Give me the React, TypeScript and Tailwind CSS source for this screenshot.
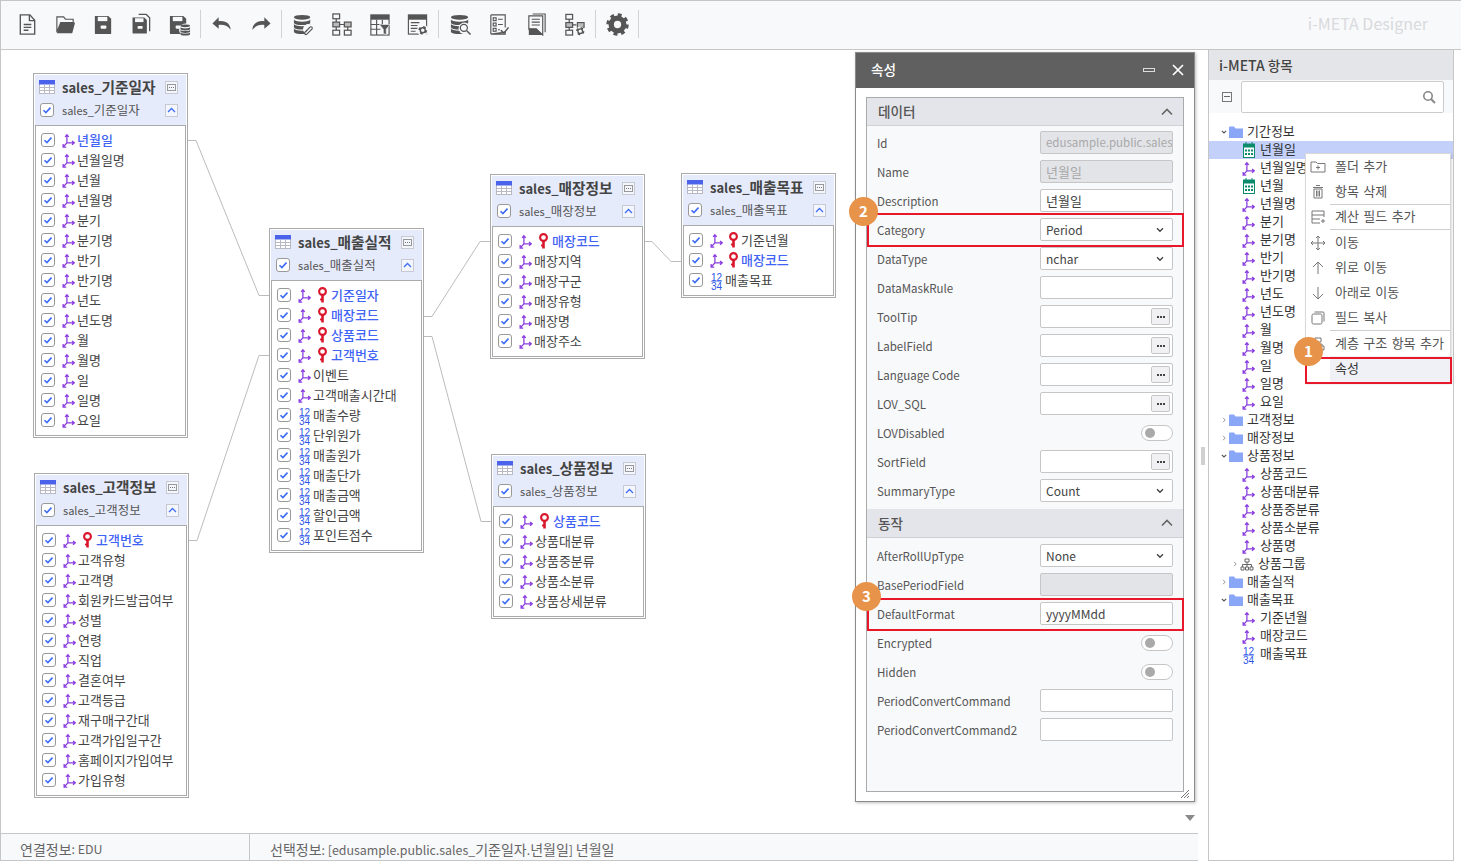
import React from "react";

const TB = "#555";

/* Hangul runs are set slightly larger than the Latin text around them, as in the reference. */
function T({ s }: { s: string }) {
  return (
    <>
      {s.split(/([가-힣]+)/).map((p, i) =>
        /[가-힣]/.test(p) ? <span key={i} className="text-[1.13em]">{p}</span> : <span key={i}>{p}</span>
      )}
    </>
  );
}

function Gear({ x, y, r = 4 }: { x: number; y: number; r?: number }) {
  return (
    <g>
      <circle cx={x} cy={y} r={r} fill="none" stroke={TB} strokeWidth={r * 0.55} strokeDasharray={`${r * 0.75} ${r * 0.82}`} />
      <circle cx={x} cy={y} r={r * 0.72} fill="none" stroke={TB} strokeWidth={r * 0.42} />
    </g>
  );
}
function Db({ x, y, w = 8, h = 9 }: { x: number; y: number; w?: number; h?: number }) {
  const ry = h * 0.13;
  const gap = h * 0.06;
  const bh = (h - 2 * ry - 3 * gap) / 3;
  const rx = w / 2;
  return (
    <g fill={TB}>
      <ellipse cx={x + rx} cy={y + ry} rx={rx} ry={ry} />
      {[0, 1, 2].map((i) => {
        const y0 = y + ry + gap * (i + 1) + bh * i + ry * 0.4;
        return <path key={i} d={`M${x} ${y0}a${rx} ${ry} 0 0 0 ${w} 0v${bh}a${rx} ${ry} 0 0 1 ${-w} 0z`} />;
      })}
    </g>
  );
}
function Floppy({ w = 18 }: { w?: number }) {
  return (
    <g>
      <path d={`M3 3h${w - 4}l3 3v15a1 1 0 0 1-1 1H4a1 1 0 0 1-1-1z`} fill={TB} />
      <rect x="6" y="4" width={w - 8} height="4.5" fill="#f8f9fb" />
      <rect x="9" y="13" width="6" height="3.5" rx="1" fill="#f8f9fb" />
    </g>
  );
}
function TreeNodes() {
  return (
    <g fill="none" stroke={TB} strokeWidth="1.3">
      <rect x="3" y="1.5" width="7" height="5" />
      <rect x="3" y="10" width="7" height="5" fill="#bbb" />
      <rect x="3" y="18" width="7" height="5" />
      <path d="M6.5 6.5V10M6.5 15v3M10 12.5h4" />
    </g>
  );
}
const toolIcons: React.ReactNode[][] = [
  [
    <g key="a" fill="none" stroke={TB} strokeWidth="1.4"><path d="M4.5 2h10l5 5.5V22h-15z" /><path d="M14 2v6h5.5M8 12h8M8 15h8M8 18h5" /></g>,
    <g key="b"><path d="M3 4h7l2 2.5h8V10H7L3 20z" fill="none" stroke={TB} strokeWidth="1.2" /><path d="M7 10h15l-3 11H3z" fill={TB} /></g>,
    <Floppy key="c" />,
    <g key="d"><g transform="translate(0 2) scale(.88)"><Floppy /></g><path d="M9 1.5h8l3.5 3.5v14" fill="none" stroke={TB} strokeWidth="1.3" /></g>,
    <g key="e"><g transform="translate(-1 0)"><Floppy /></g><circle cx="18" cy="17.5" r="6.5" fill="#f8f9fb" /><Db x={13} y={12} w={10} h={11} /></g>,
  ],
  [
    <path key="a" d="M8 8.5V4.5L1.5 11 8 16.5v-4c5-.5 9 .5 12.5 5 0-5.500-4.500-10-12.500-9z" fill={TB} />,
    <path key="b" d="M16 8.5V4.5L22.500 11 16 16.500v-4c-5-.5-9 .5-12.500 5 0-5.500 4.500-10 12.500-9z" fill={TB} />,
  ],
  [
    <g key="a"><Db x={2} y={2} w={17} h={19} /><circle cx="17" cy="17" r="5.5" fill="#f8f9fb" /><path d="M14 20l5-5.500a1.500 1.500 0 0 1 2 2l-5.500 5.500a1.200 1.200 0 0 1-2-2l5-5" fill="none" stroke={TB} strokeWidth="1.2" /></g>,
    <g key="b" fill="none" stroke={TB} strokeWidth="1.3"><rect x="3" y="1" width="7" height="5" /><rect x="3" y="9.500" width="7" height="5" fill="#bbb" /><rect x="15" y="9.500" width="7" height="5" fill="#bbb" /><rect x="3" y="18" width="7" height="5" /><rect x="15" y="18" width="7" height="5" /><path d="M6.500 6v3.500M6.500 14.500V18M18.500 14.500V18M10 12h5" /></g>,
    <g key="c"><rect x="3" y="2" width="19" height="21" fill="none" stroke={TB} strokeWidth="1.2" /><rect x="3" y="2" width="19" height="5" fill={TB} /><path d="M3 12h12M3 17h10M9 7v16M15 7v6" stroke={TB} strokeWidth="1.2" /><path d="M12 12h11l-4 5v6l-3-2v-4z" fill={TB} stroke="#f8f9fb" strokeWidth=".6" /></g>,
    <g key="d"><rect x="2.500" y="2" width="19" height="20" fill="none" stroke={TB} strokeWidth="1.2" /><rect x="2.500" y="2" width="19" height="5" fill={TB} /><path d="M5 10h9M5 13h7M5 16h9M5 19h5" stroke={TB} strokeWidth="1.2" /><circle cx="17.500" cy="18" r="6" fill="#f8f9fb" /><Gear x={17.5} y={18} r={3.6} /></g>,
  ],
  [
    <g key="a"><Db x={2} y={2} w={18} h={19} /><circle cx="16" cy="16" r="6" fill="#f8f9fb" /><circle cx="15.500" cy="15.500" r="3.700" fill="none" stroke={TB} strokeWidth="1.3" /><path d="M18.500 18.500l4 4" stroke={TB} strokeWidth="1.6" /></g>,
    <g key="b" fill="none" stroke={TB} strokeWidth="1.2"><path d="M4 2h15v13M19 20v2H4z" /><path d="M4 2v20" /><rect x="6.500" y="5" width="3" height="3" /><rect x="6.500" y="10.500" width="3" height="3" /><rect x="6.500" y="16" width="3" height="3" /><path d="M11.500 6.500h5M11.500 12h5M11.500 17.500h2" /><path d="M14.500 18l3 3 5-6" strokeWidth="1.6" /></g>,
    <g key="c"><path d="M8 1h13v19" fill="none" stroke={TB} strokeWidth="1.2" /><path d="M4 3h14.500v20L12 17H4z" fill="#f8f9fb" stroke={TB} strokeWidth="1.2" /><path d="M4 16h8l6.500 7H4z" fill={TB} /><path d="M7 6.500h8.500M7 9.500h8.500M7 12.500h8.500" stroke={TB} strokeWidth="1.2" /></g>,
    <g key="d"><TreeNodes /><rect x="15" y="10" width="7" height="5" fill="#bbb" stroke={TB} strokeWidth="1.2" /><circle cx="18" cy="19" r="4.800" fill="#f8f9fb" /><Gear x={18} y={19} r={3.4} /></g>,
  ],
  [<g key="a"><circle cx="12" cy="12" r="6.600" fill="none" stroke={TB} strokeWidth="5.6" /><circle cx="12" cy="12" r="10" fill="none" stroke={TB} strokeWidth="3.4" strokeDasharray="4 3.85" /></g>],
];

function Toolbar() {
  return (
    <div className="h-[50px] shrink-0 flex items-center pl-[7px] pb-[2px] bg-[#f8f9fb] border-l border-t border-b border-[#c6c6c6]">
      {toolIcons.map((group, i) => (
        <React.Fragment key={i}>
          <div className="flex">
            {group.map((ic, j) => (
              <div key={j} className="w-[38px] flex justify-center">
                <svg width="23" height="23" viewBox="0 0 24 24">{ic}</svg>
              </div>
            ))}
          </div>
          <div className="w-px h-[28px] mx-[2px] bg-[#d2d2d2]" />
        </React.Fragment>
      ))}
      <div className="ml-auto mr-[33px] pb-[2px] text-[16px] text-[#d9dadd]">i-META Designer</div>
    </div>
  );
}

function Check() {
  return (
    <span className="w-[14px] h-[14px] shrink-0 flex items-center justify-center rounded-[3px] border border-[#999] bg-white">
      <svg width="10" height="10" viewBox="0 0 10 10"><path d="M1.500 5.200l2.400 2.400 4.600-5" fill="none" stroke="#3f6cf5" strokeWidth="1.6" /></svg>
    </span>
  );
}
function Dim() {
  return (
    <svg width="13" height="15" viewBox="0 0 12 14" className="shrink-0">
      <path d="M4.500 9.200V2M4.500 9.200H11M4.500 9.200L1.200 12.800M2.800 3.600L4.500 1.600l1.700 2M9.300 7.400l2.100 1.800-2.100 1.800M1 10.200v2.900h2.900" fill="none" stroke="#8a3fe0" strokeWidth="1.2" />
    </svg>
  );
}
function Key() {
  return (
    <svg width="11" height="16" viewBox="0 0 11 16" className="shrink-0">
      <circle cx="5.500" cy="4.500" r="3.400" fill="none" stroke="#d9162b" strokeWidth="2.1" />
      <path d="M5.500 8v7.500" stroke="#d9162b" strokeWidth="2.600" />
      <path d="M5.500 12.500h-2.500" stroke="#d9162b" strokeWidth="1.8" />
    </svg>
  );
}
function Measure() {
  return (
    <span className="w-[13px] h-[16px] shrink-0 flex flex-col items-center translate-y-[2px] font-['Liberation_Sans',sans-serif] text-[10px] text-[#2f55e8]">
      <span className="h-[8px] leading-[8px] border-b border-[#9db0f2]">12</span>
      <span className="h-[8px] leading-[9px]">34</span>
    </span>
  );
}
function TableIcon() {
  return (
    <svg width="16" height="14" viewBox="0 0 16 14" className="shrink-0">
      <rect x="0.500" y="0.500" width="15" height="13" fill="#fff" stroke="#b9b9c4" />
      <rect width="16" height="4.500" fill="#4a63ea" />
      <path d="M0 7.500h16M0 10.500h16M5.500 4.500V14M10.500 4.500V14" stroke="#b9b9c4" />
    </svg>
  );
}
function MiniBtn({ children }: { children: React.ReactNode }) {
  return <span className="w-[13px] h-[13px] flex items-center justify-center border border-[#c9c9d2] bg-[#f4f6fd]">{children}</span>;
}

type F = { t: string; k?: boolean; m?: boolean; b?: boolean; plain?: boolean };
const d = (s: string): F[] => s.split(" ").map((t) => ({ t }));

function TableNode({ title, fields, pos, tight }: { title: string; fields: F[]; pos: string; tight?: boolean }) {
  return (
    <div className={`absolute w-[155px] border border-[#aaa] p-px bg-white z-10 ${pos}`}>
      <div className="bg-[#e6ebfb] h-[50px] pl-[3px] pr-[8px] pt-[2px] flex flex-col gap-[3px]">
        <div className="h-[20px] flex items-center">
          <span className="ml-[1px]"><TableIcon /></span>
          <span className="ml-[7px] flex-1 text-[13px] font-bold text-[#444] whitespace-nowrap"><T s={title} /></span>
          <MiniBtn><svg width="9" height="7" viewBox="0 0 9 7"><rect x=".5" y=".5" width="8" height="6" fill="none" stroke="#999" /><path d="M2 3.500h1M4 3.500h1M6 3.500h1" stroke="#777" /></svg></MiniBtn>
        </div>
        <div className="h-[20px] flex items-center pl-[2px]">
          <Check />
          <span className="ml-[8px] flex-1 text-[11px] text-[#555] whitespace-nowrap"><T s={title} /></span>
          <MiniBtn><svg width="9" height="6" viewBox="0 0 9 6"><path d="M1 5l3.500-3.500L8 5" fill="none" stroke="#3f6cf5" strokeWidth="1.3" /></svg></MiniBtn>
        </div>
      </div>
      <div className="border border-[#aaa] pt-[4px] pb-[5px]">
        {fields.map((f, i) => (
          <div key={i} className="h-[20px] flex items-center pl-[5px] whitespace-nowrap leading-[16px]">
            <Check />
            <span className="ml-[7px] w-[13px] flex justify-center">{f.m ? <Measure /> : <Dim />}</span>
            {f.k && <span className={tight ? "ml-[5px]" : "ml-[6px]"}><Key /></span>}
            <span className={`text-[11.5px] ${f.k && !tight ? "ml-[3px]" : "ml-[2px]"} ${(f.k && !f.plain) || f.b ? "font-medium text-[#3f63f5]" : "text-[#444]"}`}><T s={f.t} /></span>
          </div>
        ))}
      </div>
    </div>
  );
}

function Canvas() {
  const k = (t: string): F => ({ t, k: true });
  const m = (t: string): F => ({ t, m: true });
  return (
    <div className="relative flex-1 bg-white">
      <svg className="absolute left-0 top-0" width="900" height="783" viewBox="1 50 900 783" fill="none" stroke="#bcbcbc">
        <path d="M186 140.500h10L259 295.500h11" />
        <path d="M187 540.500h10L259 355.500h11" />
        <path d="M422 316.500h10L480 241.500h11" />
        <path d="M422 336.500h10L481 521.500h11" />
        <path d="M642 241.500h10L671 261.500h11" />
      </svg>
      <TableNode pos="left-[32px] top-[23px]" title="sales_기준일자" fields={[{ t: "년월일", b: true }, ...d("년월일명 년월 년월명 분기 분기명 반기 반기명 년도 년도명 월 월명 일 일명 요일")]} />
      <TableNode pos="left-[33px] top-[423px]" title="sales_고객정보" fields={[k("고객번호"), ...d("고객유형 고객명 회원카드발급여부 성별 연령 직업 결혼여부 고객등급 재구매구간대 고객가입일구간 홈페이지가입여부 가입유형")]} />
      <TableNode pos="left-[268px] top-[178px]" title="sales_매출실적" fields={[k("기준일자"), k("매장코드"), k("상품코드"), k("고객번호"), ...d("이벤트 고객매출시간대"), ...["매출수량", "단위원가", "매출원가", "매출단가", "매출금액", "할인금액", "포인트점수"].map(m)]} />
      <TableNode pos="left-[489px] top-[124px]" title="sales_매장정보" fields={[k("매장코드"), ...d("매장지역 매장구군 매장유형 매장명 매장주소")]} />
      <TableNode pos="left-[680px] top-[123px]" tight title="sales_매출목표" fields={[{ t: "기준년월", k: true, plain: true }, k("매장코드"), m("매출목표")]} />
      <TableNode pos="left-[490px] top-[404px]" title="sales_상품정보" fields={[k("상품코드"), ...d("상품대분류 상품중분류 상품소분류 상품상세분류")]} />
      <svg className="absolute left-[1184px] bottom-[12px]" width="10" height="6" viewBox="0 0 10 6"><path d="M0 0h10L5 6z" fill="#8a8a8a" /></svg>
    </div>
  );
}

function Badge({ n, pos }: { n: string; pos: string }) {
  return (
    <div className={`absolute z-30 w-[29px] h-[29px] rounded-full bg-[#e8934a] text-white text-[15px] font-bold flex items-center justify-center ${pos}`}>{n}</div>
  );
}

const Chevron = () => (
  <svg width="8" height="6" viewBox="0 0 8 6"><path d="M1 1.200l3 3 3-3" fill="none" stroke="#444" strokeWidth="1.4" /></svg>
);

type RowKind = "text" | "disabled" | "select" | "dots" | "toggle";
function PropRow({ label, kind, value }: { label: string; kind: RowKind; value?: string }) {
  const base = "w-[133px] h-[23px] rounded-[2px] border border-[#c6c6c6] flex items-center pl-[5px] whitespace-nowrap overflow-hidden";
  const hangul = !!value && /^[가-힣]+$/.test(value);
  const size = hangul ? "text-[13px]" : kind === "disabled" ? "text-[11.5px]" : "text-[12px]";
  return (
    <div className="h-[29px] flex items-center justify-between">
      <span className="pt-[2px] text-[11.5px] text-[#555] whitespace-nowrap">{label}</span>
      {kind === "text" && <div className={`${base} ${size} bg-white text-[#444]`}>{value}</div>}
      {kind === "disabled" && <div className={`${base} ${size} bg-[#e3e4e8] text-[#a8a8a8]`}>{value}</div>}
      {kind === "select" && (
        <div className={`${base} ${size} bg-white text-[#444] justify-between pr-[8px]`}>{value}<Chevron /></div>
      )}
      {kind === "dots" && (
        <div className={`${base} bg-white justify-end pr-[2px]`}>
          <span className="w-[19px] h-[17px] border border-[#c6c6c6] rounded-[2px] bg-[#f1f1f3] flex items-center justify-center gap-[1px]">
            <i className="w-[2px] h-[2px] bg-[#444]" /><i className="w-[2px] h-[2px] bg-[#444]" /><i className="w-[2px] h-[2px] bg-[#444]" />
          </span>
        </div>
      )}
      {kind === "toggle" && (
        <span className="w-[32px] h-[16px] rounded-full border border-[#c6c6c6] bg-white flex items-center pl-[3px]">
          <i className="w-[10px] h-[10px] rounded-full bg-[#aaa]" />
        </span>
      )}
    </div>
  );
}
function SectionHead({ t, h }: { t: string; h: string }) {
  return (
    <div className={`${h} bg-[#e4e5ea] flex items-center justify-between pl-[11px] pr-[10px] text-[13.6px] font-medium text-[#555] border-b border-[#cfcfd4]`}>
      {t}
      <svg width="12" height="8" viewBox="0 0 12 8"><path d="M1 6.500l5-5 5 5" fill="none" stroke="#666" strokeWidth="1.6" /></svg>
    </div>
  );
}

function PropertyPanel() {
  return (
    <div className="absolute left-[855px] top-[52px] w-[340px] h-[750px] z-20 bg-white border border-[#8a8a8a] shadow-[1px_1px_3px_rgba(0,0,0,0.25)] flex flex-col">
      <div className="h-[35px] shrink-0 bg-[#606060] flex items-center pl-[15px] pr-[10px] pb-[2px] text-white text-[13.6px] font-medium">
        <span className="flex-1">속성</span>
        <span className="w-[12px] h-[4px] border border-[#ddd] mr-[17px]" />
        <svg width="12" height="12" viewBox="0 0 12 12"><path d="M1 1l10 10M11 1L1 11" stroke="#fff" strokeWidth="1.7" /></svg>
      </div>
      <div className="relative flex-1 px-[10px] pt-[9px] pb-[9px]">
        <div className="h-full border border-[#aaa] bg-[#f8f9fb]">
          <SectionHead t="데이터" h="h-[28px]" />
          <div className="px-[10px] pt-[2px] pb-[4px]">
            <PropRow label="Id" kind="disabled" value="edusample.public.sales_기준일자.년월일" />
            <PropRow label="Name" kind="disabled" value="년월일" />
            <PropRow label="Description" kind="text" value="년월일" />
            <PropRow label="Category" kind="select" value="Period" />
            <PropRow label="DataType" kind="select" value="nchar" />
            <PropRow label="DataMaskRule" kind="text" />
            <PropRow label="ToolTip" kind="dots" />
            <PropRow label="LabelField" kind="dots" />
            <PropRow label="Language Code" kind="dots" />
            <PropRow label="LOV_SQL" kind="dots" />
            <PropRow label="LOVDisabled" kind="toggle" />
            <PropRow label="SortField" kind="dots" />
            <PropRow label="SummaryType" kind="select" value="Count" />
          </div>
          <SectionHead t="동작" h="h-[29px]" />
          <div className="px-[10px] pt-[3px]">
            <PropRow label="AfterRollUpType" kind="select" value="None" />
            <PropRow label="BasePeriodField" kind="disabled" />
            <PropRow label="DefaultFormat" kind="text" value="yyyyMMdd" />
            <PropRow label="Encrypted" kind="toggle" />
            <PropRow label="Hidden" kind="toggle" />
            <PropRow label="PeriodConvertCommand" kind="text" />
            <PropRow label="PeriodConvertCommand2" kind="text" />
          </div>
        </div>
        <svg className="absolute right-[5px] bottom-[3px]" width="8" height="8" viewBox="0 0 8 8"><path d="M8 0L0 8M8 3L3 8M8 6L6 8" stroke="#777" /></svg>
      </div>
    </div>
  );
}

function Folder() {
  return (
    <svg width="14" height="12" viewBox="0 0 14 12" className="shrink-0">
      <path d="M0 1.500A1 1 0 0 1 1 .5h4l1.500 2H14V12H0z" fill="#8aa6f7" />
    </svg>
  );
}
function Calendar() {
  return (
    <svg width="12" height="16" viewBox="0 0 12 16" className="shrink-0">
      <rect x=".5" y="2" width="11" height="13.500" fill="#fff" stroke="#0c8a6c" />
      <rect x="0" y="2" width="12" height="3.500" fill="#0c8a6c" />
      <path d="M3 0v3M9 0v3" stroke="#0c8a6c" />
      <path d="M2 7.500h2v2H2zM5 7.500h2v2H5zM8 7.500h2v2H8zM2 11h2v2H2zM5 11h2v2H5zM8 11h2v2H8z" fill="#0c8a6c" />
    </svg>
  );
}
function Hier() {
  return (
    <svg width="14" height="13" viewBox="0 0 14 13" className="shrink-0">
      <path d="M5 1h4v3H5zM1 9h3v3H1zM5.500 9h3v3h-3zM10 9h3v3h-3z" fill="none" stroke="#666" />
      <path d="M7 4v5M2.500 9V6.500h9V9" fill="none" stroke="#666" />
    </svg>
  );
}
function Arrow({ open }: { open: boolean }) {
  return (
    <svg width="6" height="6" viewBox="0 0 6 6" className="shrink-0">
      {open ? <path d="M.8 1.800L3 4l2.200-2.200" fill="none" stroke="#555" strokeWidth="1.1" /> : <path d="M2 .8L4.200 3 2 5.200" fill="none" stroke="#999" strokeWidth="1" />}
    </svg>
  );
}
function FolderRow({ t, open }: { t: string; open?: boolean }) {
  return (
    <div className="h-[18px] flex items-center pl-[12px] text-[11.5px] leading-[16px] text-[#333] whitespace-nowrap">
      <Arrow open={!!open} />
      <span className="ml-[2px]"><Folder /></span>
      <span className="ml-[4px] pb-[2px]"><T s={t} /></span>
    </div>
  );
}
function Leaf({ t, kind = "dim", sel, expander }: { t: string; kind?: "dim" | "cal" | "m" | "hier"; sel?: boolean; expander?: boolean }) {
  return (
    <div className={`h-[18px] flex items-center pl-[33px] text-[11.5px] leading-[16px] text-[#333] whitespace-nowrap relative ${sel ? "bg-[#c2d0fa]" : ""}`}>
      {expander && <span className="absolute left-[23px] top-[6px]"><Arrow open={false} /></span>}
      <span className={`w-[13px] flex justify-center ${kind === "hier" ? "-ml-[2px]" : ""}`}>
        {kind === "dim" && <Dim />}
        {kind === "cal" && <Calendar />}
        {kind === "m" && <Measure />}
        {kind === "hier" && <Hier />}
      </span>
      <span className="ml-[5px] pb-[2px]"><T s={t} /></span>
    </div>
  );
}

function RightPanel() {
  const leaves = "년월일명 년월 년월명 분기 분기명 반기 반기명 년도 년도명 월 월명 일 일명 요일".split(" ");
  return (
    <div className="w-[246px] shrink-0 border-x border-b border-[#c6c6c6] flex flex-col bg-white">
      <div className="h-[30px] shrink-0 bg-[#e4e5e8] flex items-center pl-[10px] font-medium text-[#444] whitespace-nowrap">
        <span className="text-[14px]">i-META&nbsp;</span><span className="text-[13.6px]">항목</span>
      </div>
      <div className="h-[33px] shrink-0 bg-[#f8f9fb] flex items-center pl-[13px] pr-[9px]">
        <span className="w-[10px] h-[10px] border border-[#777] flex items-center justify-center"><i className="w-[6px] h-px bg-[#666]" /></span>
        <div className="ml-[9px] flex-1 h-[32px] bg-white border border-[#ccc] rounded-[2px] flex items-center justify-end pr-[7px]">
          <svg width="14" height="14" viewBox="0 0 14 14"><circle cx="6" cy="6" r="4.200" fill="none" stroke="#888" strokeWidth="1.6" /><path d="M9 9l4 4" stroke="#888" strokeWidth="2" /></svg>
        </div>
      </div>
      <div className="pt-[10px]">
        <FolderRow t="기간정보" open />
        <Leaf t="년월일" kind="cal" sel />
        {leaves.map((t) => <Leaf key={t} t={t} kind={t === "년월" ? "cal" : "dim"} />)}
        <FolderRow t="고객정보" />
        <FolderRow t="매장정보" />
        <FolderRow t="상품정보" open />
        {"상품코드 상품대분류 상품중분류 상품소분류 상품명".split(" ").map((t) => <Leaf key={t} t={t} />)}
        <Leaf t="상품그룹" kind="hier" expander />
        <FolderRow t="매출실적" />
        <FolderRow t="매출목표" open />
        <Leaf t="기준년월" />
        <Leaf t="매장코드" />
        <Leaf t="매출목표" kind="m" />
      </div>
    </div>
  );
}

const mi = { fill: "none", stroke: "#777", strokeWidth: 1 } as const;
const menu: { t: string; h: string; icon?: React.ReactNode; sep?: boolean; active?: boolean }[] = [
  { t: "폴더 추가", h: "h-[25px]", icon: <g {...mi}><path d="M1 3h5l1.500 1.500H15V13H1zM8 6.500v4M6 8.500h4" /></g> },
  { t: "항목 삭제", h: "h-[25px]", icon: <g {...mi}><path d="M3 3.500h10M6 1.500h4M4 5h8v9H4zM6.500 6.500v6M8 6.500v6M9.500 6.500v6" /></g>, sep: true },
  { t: "계산 필드 추가", h: "h-[24px]", icon: <g {...mi}><path d="M14 8V2H2v12h8M2 6h12M2 10h8M11 12h4M13 10v4" /></g>, sep: true },
  { t: "이동", h: "h-[25px]", icon: <g {...mi}><path d="M8 1v14M1 8h14M6 3l2-2 2 2M6 13l2 2 2-2M3 6L1 8l2 2M13 6l2 2-2 2" /></g> },
  { t: "위로 이동", h: "h-[25px]", icon: <g {...mi}><path d="M8 14V2M3 7l5-5 5 5" /></g> },
  { t: "아래로 이동", h: "h-[25px]", icon: <g {...mi}><path d="M8 2v12M3 9l5 5 5-5" /></g> },
  { t: "필드 복사", h: "h-[25px]", icon: <g {...mi}><rect x="2" y="4" width="10" height="10" rx="1.500" /><path d="M4.500 2H13a1 1 0 0 1 1 1v8.500" /></g>, sep: true },
  { t: "계층 구조 항목 추가", h: "h-[25px]", icon: <g {...mi}><path d="M5 2h6v4H5zM2 10h4v4H2zM10 10h4v4h-4zM8 6v2M4 10V8h8v2" /></g> },
  { t: "속성", h: "h-[26px]", active: true },
];
function ContextMenu() {
  return (
    <div className="absolute left-[1305px] top-[153px] w-[146px] z-20 bg-white border border-[#d8d8d8] shadow-[1px_1px_2px_rgba(0,0,0,0.15)] text-[13px] text-[#555] [word-spacing:1.5px]">
      {menu.map((m) => (
        <div key={m.t}>
          <div className={`flex items-center ${m.h}`}>
            <span className="w-[24px] flex justify-center shrink-0">
              {m.icon && <svg width="16" height="16" viewBox="0 0 16 16">{m.icon}</svg>}
            </span>
            <span className={`flex-1 pl-[5px] pb-[2px] h-full flex items-center whitespace-nowrap ${m.active ? "bg-[#f0f1f6] text-[#333]" : ""}`}>{m.t}</span>
          </div>
          {m.sep && <div className="ml-[24px] h-px bg-[#cfcfcf]" />}
        </div>
      ))}
    </div>
  );
}

function Overlays() {
  return (
    <>
      <div className="absolute left-[867px] top-[213px] w-[317px] h-[34px] border-2 border-[#e8182a] z-30" />
      <div className="absolute left-[867px] top-[598px] w-[317px] h-[33px] border-2 border-[#e8182a] z-30" />
      <div className="absolute left-[1305px] top-[357px] w-[147px] h-[27px] border-2 border-[#e8182a] z-30" />
      <Badge n="2" pos="left-[849px] top-[197px]" />
      <Badge n="3" pos="left-[852px] top-[582px]" />
      <Badge n="1" pos="left-[1294px] top-[337px]" />
    </>
  );
}

export default function App() {
  return (
    <div className="relative w-[1461px] h-[861px] overflow-hidden bg-white flex flex-col font-['Noto_Sans_CJK_KR','Noto_Sans',sans-serif]">
      <Toolbar />
      <div className="flex-1 flex min-h-0">
        <div className="w-[1198px] shrink-0 flex flex-col border-l border-[#c6c6c6]">
          <Canvas />
          <div className="h-[28px] shrink-0 flex items-center border-t border-b border-[#c6c6c6] bg-[#f8f9fb] text-[12.4px] text-[#666] whitespace-nowrap">
            <div className="w-[249px] h-full pl-[19px] pt-[5px] flex items-center border-r border-[#c6c6c6]"><T s="연결정보: EDU" /></div>
            <div className="pl-[20px] pt-[5px]"><T s="선택정보: [edusample.public.sales_기준일자.년월일] 년월일" /></div>
          </div>
        </div>
        <div className="w-[10px] shrink-0 flex items-center justify-center">
          <i className="w-[4px] h-[18px] bg-[#d0d0d0]" />
        </div>
        <RightPanel />
      </div>
      <PropertyPanel />
      <ContextMenu />
      <Overlays />
    </div>
  );
}
